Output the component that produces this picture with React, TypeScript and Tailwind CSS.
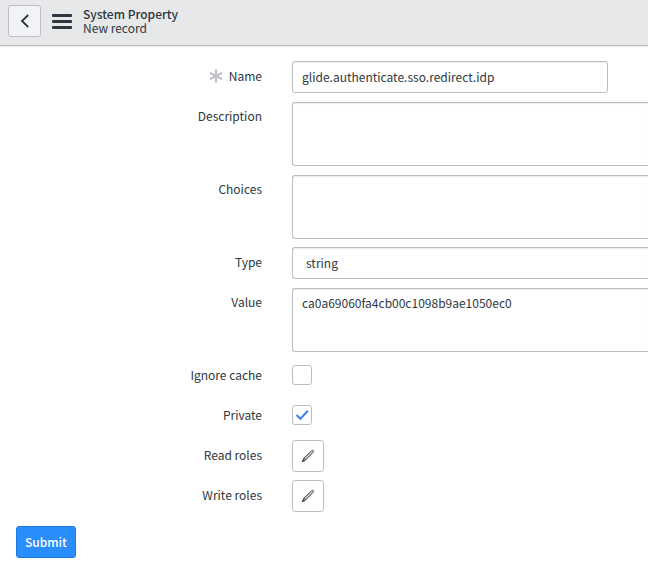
import React, { useState } from "react";

const fieldClass =
  "border border-[#bcbec2] bg-white shadow-[inset_0_1px_1px_rgba(0,0,0,0.07)] outline-none focus:border-[#278efc]";

interface RowProps {
  label: string;
  htmlFor: string;
  mandatory?: boolean;
  children: React.ReactNode;
}

const FormRow: React.FC<RowProps> = ({
  label,
  htmlFor,
  mandatory,
  children,
}) => (
  <div className="flex min-h-8 items-start gap-[30px]">
    <div className="flex w-[262px] shrink-0 items-center justify-end gap-1.5 pt-[5px]">
      {mandatory && <MandatoryIcon />}
      <label htmlFor={htmlFor} className="leading-5">
        {label}
      </label>
    </div>
    {children}
  </div>
);

const MandatoryIcon = () => (
  <svg
    viewBox="0 0 14 14"
    className="h-3.5 w-3.5"
    stroke="#bdbfc5"
    strokeWidth="2"
    aria-hidden="true"
  >
    <path d="M7 .5v13M.8 3.8l12.4 6.4M.8 10.2l12.4-6.4" />
  </svg>
);

const PencilIcon = () => (
  <svg
    viewBox="0 0 14 14"
    className="h-3.5 w-3.5"
    fill="#c4c6c9"
    stroke="#4a4d52"
    strokeWidth="1"
    strokeLinejoin="round"
    aria-hidden="true"
  >
    <path d="M1.4 12.6l1.5-3.5 7.8-7.400c.6-.5 1.200-.5 1.600-.1.4.4.4 1.100-.1 1.600L4.700 11z" />
    <path d="M2.900 9.100l1.800 1.900" />
    <path d="M1.400 12.600l.9-2.100 1.200 1.200z" fill="#4a4d52" />
  </svg>
);

interface TextAreaRowProps {
  id: string;
  label: string;
  initial?: string;
}

const TextAreaRow: React.FC<TextAreaRowProps> = ({
  id,
  label,
  initial = "",
}) => {
  const [value, setValue] = useState(initial);
  return (
    <FormRow label={label} htmlFor={id}>
      <textarea
        id={id}
        value={value}
        spellCheck={false}
        onChange={(e) => setValue(e.target.value)}
        className={`${fieldClass} mt-px h-16 min-w-0 flex-1 resize-none rounded-l-[3px] border-r-0 px-[9px] py-1 leading-5`}
      />
    </FormRow>
  );
};

const CheckboxRow: React.FC<{
  id: string;
  label: string;
  initial?: boolean;
}> = ({ id, label, initial = false }) => {
  const [checked, setChecked] = useState(initial);
  return (
    <FormRow label={label} htmlFor={id}>
      <div className="grid pt-[5px]">
        <input
          id={id}
          type="checkbox"
          checked={checked}
          onChange={(e) => setChecked(e.target.checked)}
          className="col-start-1 row-start-1 h-5 w-5 appearance-none rounded-[3px] border border-[#bcbec2] bg-white"
        />
        {checked && (
          <svg
            viewBox="0 0 20 20"
            className="pointer-events-none col-start-1 row-start-1 h-5 w-5"
            fill="none"
            stroke="#3c82f0"
            strokeWidth="2"
            aria-hidden="true"
          >
            <path d="M4.600 10l3.800 3.700 7.400-7.900" />
          </svg>
        )}
      </div>
    </FormRow>
  );
};

const RolesRow: React.FC<{ id: string; label: string }> = ({ id, label }) => (
  <FormRow label={label} htmlFor={id}>
    <button
      id={id}
      type="button"
      className="flex h-8 w-8 items-center justify-center rounded-[3px] border border-[#bcbec2] bg-white hover:bg-gray-100"
    >
      <PencilIcon />
    </button>
  </FormRow>
);

export default function App() {
  const [name, setName] = useState("glide.authenticate.sso.redirect.idp");
  const [type, setType] = useState("string");

  return (
    <div className="min-h-screen bg-white font-['Noto_Sans_CJK_SC','Noto_Sans',sans-serif] text-xs text-[#2e3740]">
      <header className="flex h-[46px] items-start border-b border-[#b9bbbe] bg-[#e6e8ea] px-2 pt-[5px] shadow-[0_1px_1px_rgba(0,0,0,0.06)]">
        <button
          type="button"
          aria-label="Back"
          className="flex h-8 w-[33px] items-center justify-center rounded-[3px] border border-[#bcbec2] bg-[#f1f3f4]"
        >
          <svg
            viewBox="0 0 10 14"
            className="h-3.5 w-2.5"
            fill="none"
            stroke="#2e3640"
            strokeWidth="1.800"
            aria-hidden="true"
          >
            <path d="M8.200 1L2 7l6.200 6" />
          </svg>
        </button>
        <button type="button" aria-label="Menu" className="ml-[11px] pt-2">
          <svg
            viewBox="0 0 20 16"
            className="h-4 w-5"
            fill="#2e3640"
            aria-hidden="true"
          >
            <rect y="1" width="20" height="3" rx="1" />
            <rect y="7" width="20" height="3" rx="1" />
            <rect y="13" width="20" height="3" rx="1" />
          </svg>
        </button>
        <div className="ml-[11px] pt-0.5 leading-[14px]">
          <h1 className="font-medium">System Property</h1>
          <div>New record</div>
        </div>
      </header>

      <form onSubmit={(e) => e.preventDefault()} className="pt-[15px]">
        <div className="flex flex-col gap-2">
          <FormRow label="Name" htmlFor="name" mandatory>
            <input
              id="name"
              type="text"
              value={name}
              spellCheck={false}
              onChange={(e) => setName(e.target.value)}
              className={`${fieldClass} h-8 w-[316px] rounded-[3px] px-[9px] pb-0.5`}
            />
          </FormRow>
          <TextAreaRow id="description" label="Description" />
          <TextAreaRow id="choices" label="Choices" />
          <FormRow label="Type" htmlFor="type">
            <select
              id="type"
              value={type}
              onChange={(e) => setType(e.target.value)}
              className={`${fieldClass} h-8 min-w-0 flex-1 appearance-none rounded-l-[3px] border-r-0 px-[13px]`}
            >
              <option value="string">string</option>
            </select>
          </FormRow>
          <TextAreaRow
            id="value"
            label="Value"
            initial="ca0a69060fa4cb00c1098b9ae1050ec0"
          />
          <CheckboxRow id="ignore-cache" label="Ignore cache" />
          <CheckboxRow id="private" label="Private" initial />
          <RolesRow id="read-roles" label="Read roles" />
          <RolesRow id="write-roles" label="Write roles" />
        </div>
        <button
          type="submit"
          className="mt-3.5 ml-4 h-8 rounded-[3px] border border-[#1b78de] bg-[#278efc] px-2 font-medium text-white hover:bg-[#1b78de]"
        >
          Submit
        </button>
      </form>
    </div>
  );
}
